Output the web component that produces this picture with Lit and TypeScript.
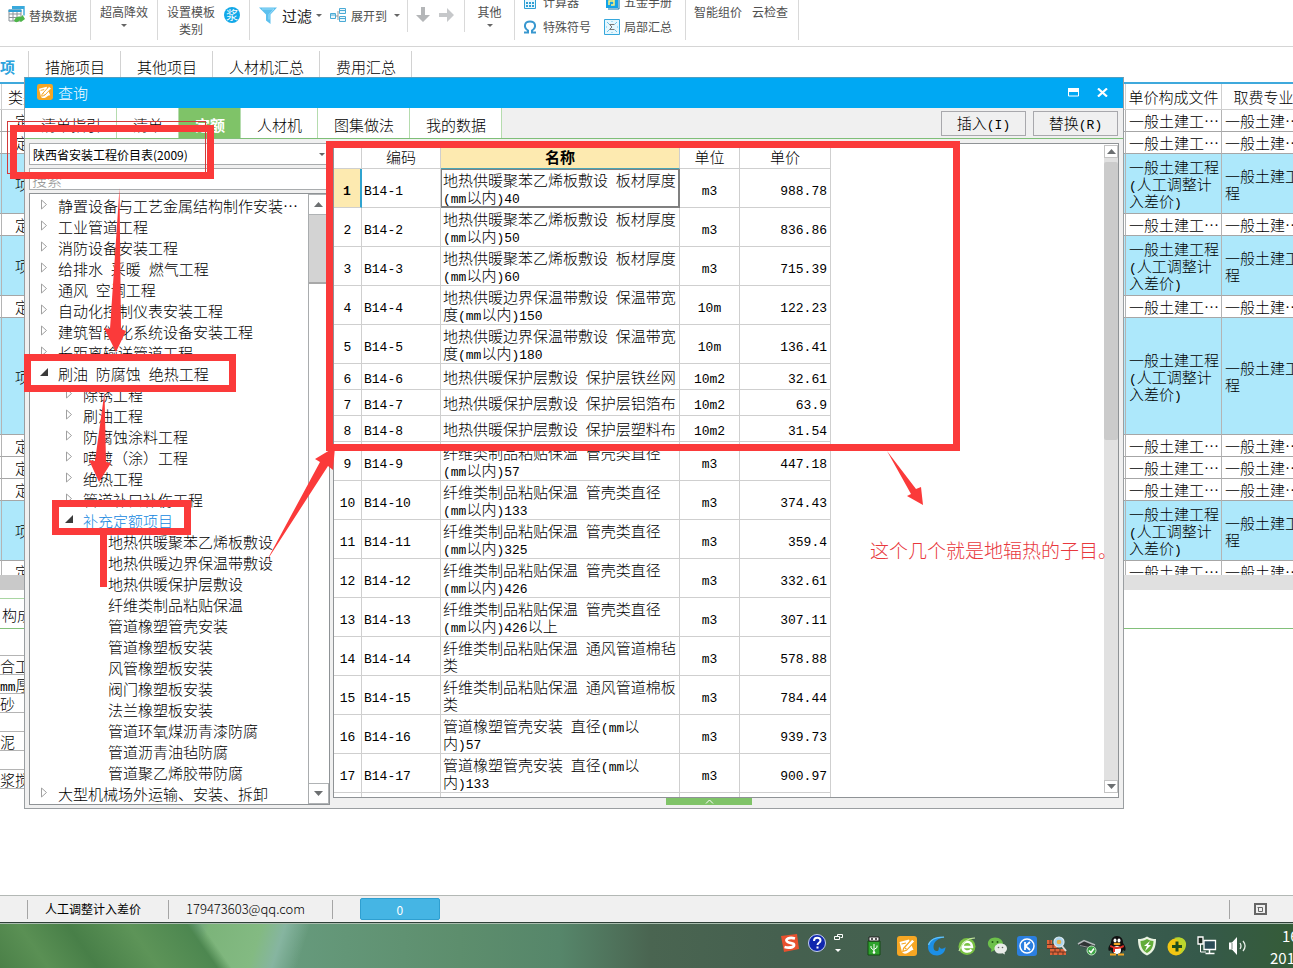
import { LitElement, html, svg, css, nothing } from "lit";
import { customElement, property } from "lit/decorators.js";
import { classMap } from "lit/directives/class-map.js";

/* Latin runs use the half-width monospace face, Chinese runs keep the body face. */
const mixed = (text: string) =>
  text
    .split(/([\x20-\x7e]+)/)
    .filter((part) => part.length > 0)
    .map((part) => (/^[\x20-\x7e]/.test(part) ? html`<span class="latin">${part}</span>` : part));

const shared = css`
  * {
    box-sizing: border-box;
  }
  button,
  input,
  select {
    font: inherit;
    color: inherit;
    margin: 0;
    padding: 0;
    border: 0;
    border-radius: 0;
    background: none;
    outline: none;
  }
  svg {
    display: block;
    flex: none;
  }
  table {
    border-collapse: separate;
    border-spacing: 0;
    table-layout: fixed;
  }
  .latin {
    font-family: "Liberation Mono", monospace;
    font-size: 13px;
    line-height: 0;
    white-space: pre-wrap;
  }
`;

/* ---------- icons ---------- */
const noteShape = svg`<rect width="20" height="20" rx="3" fill="#f6a623"/>
  <path d="M2.500 6 12 3.500l4.500 10.500c-3 0-4 2.500-7 3.500-2.500.5-4-.500-4.500-1.500z" fill="#fff"/>
  <path d="M6.500 12.500 15 3l3 2.300-8.500 9-3.700 1z" fill="#fff" stroke="#f6a623" stroke-width="1.200"/>
  <path d="M4.500 8l4.500-1M8 12l1.500 1.300" stroke="#f6a623" stroke-width="1.200"/>`;
const noteIcon = html`<svg width="16" height="16" viewBox="0 0 20 20">${noteShape}</svg>`;

const replaceIcon = html`<svg width="18" height="18" viewBox="0 0 18 18">
  <path d="M4 .5h12v9" fill="none" stroke="#39a9dc" stroke-width="1.4" />
  <path d="M4 0h12v3H4z" fill="#39a9dc" />
  <path d="M1 4h12v11H1zM1 8h12M1 11.500h12M5 5v10M9 5v10" fill="#fff" stroke="#8b9297" />
  <path d="M.5 3.500h13v2.500H.5z" fill="#2f9fd4" />
  <path d="M6 14.500c2-4 5-4.500 7-3.500l1.500-2L17 13l-4 3-1.500-1.500c-2 2-4 2.500-5.500 0z" fill="#4db648" />
</svg>`;
const filterIcon = html`<svg width="18" height="17" viewBox="0 0 18 17">
  <path d="M0 .5h18l-6.500 7V17L7 13.500v-6z" fill="#5cc0ee" />
  <path d="M3 2h12l-5 5.500v5" fill="none" stroke="#9adcf8" />
</svg>`;
const expandIcon = html`<svg width="17" height="15" viewBox="0 0 17 15" fill="#eaf7fd" stroke="#4aaad5">
  <path d="M.5 5.500h5v5h-5zM9.500.5h6v5h-6zM9.500 8.500h6v5h-6z" />
  <path d="M1 7h4M10 2.500h5M10 10.500h5" />
  <path d="M6 8h2M8 3v9" stroke="#999" fill="none" />
</svg>`;
const arrowDown = html`<svg width="14" height="16" viewBox="0 0 14 16"><path d="M5 0h4v8h5l-7 7-7-7h5z" fill="#b4b6b8" /></svg>`;
const arrowRight = html`<svg width="16" height="14" viewBox="0 0 16 14"><path d="M0 5v4h8v5l7-7-7-7v5z" fill="#c6c8ca" /></svg>`;
const calcIcon = html`<svg width="14" height="14" viewBox="0 0 14 14">
  <path d="M1.500.5h11v13h-11z" fill="#eaf7fd" stroke="#2f9fd4" />
  <path d="M2 1h10v4H2z" fill="#5cc0ee" />
  <path d="M3 8h8M3 11h8" stroke="#2f9fd4" stroke-width="2" stroke-dasharray="2 1" />
</svg>`;
const omegaIcon = html`<svg width="14" height="14" viewBox="0 0 14 14">
  <path d="M1 12.500h4v-2C0 7 1.500 1.500 7 1.500S14 7 9 10.500v2h4" fill="none" stroke="#3897cf" stroke-width="2" />
</svg>`;
const bookIcon = html`<svg width="16" height="16" viewBox="0 0 16 16">
  <path d="M2 1h12v13H2z" fill="#12a2e6" /><path d="M4 15h11V3" fill="none" stroke="#0b74aa" />
  <path d="M5 11V7h5M10 5v6H7" fill="none" stroke="#fff27a" stroke-width="1.500" />
</svg>`;
const sumIcon = html`<svg width="16" height="16" viewBox="0 0 16 16">
  <path d="M.5.5h15v15H.5z" fill="#e6f7fe" stroke="#35a7dc" />
  <path d="M3 3l2 2M13 3l-2 2M3 13l2-2M13 13l-2-2M8 2v1M8 13v1M2 8h1M13 8h1" stroke="#6cc3ea" />
  <path d="M10.500 5.500h-5L8 8l-2.500 2.500h5" fill="none" stroke="#777" />
</svg>`;
const caret = html`<svg width="6" height="3" viewBox="0 0 6 3"><path d="M0 0h6L3 3z" fill="#666" /></svg>`;

const trayIcons = [
  svg`<path d="M1 5h12v14H1z" fill="#2fa32d" stroke="#124d12"/><path d="M2 1h10v4H2z" fill="#f4f4f4" stroke="#222"/><path d="M4 3h2M8 3h2" stroke="#222" stroke-width="1.500"/><path d="M7 8v9M4 10v2l3 2.500M10 9.500v2L7 13.500" fill="none" stroke="#fff"/><circle cx="7" cy="16.500" r="1.300" fill="#fff"/>`,
  noteShape,
  svg`<path d="M18 1.500C9-1 1 4 1 11c0 5 4 8.500 9 8.500s8.500-4 8.500-8.500c-1.500 1.500-3 2-4.500 1.500-1-.300-1.500-1-2-2-.5 2.500 0 4-1.500 4.500-2.500.500-4-1.500-4-4C6.500 5.500 11 2 18 1.500z" fill="#1c8fe6"/><path d="M17 1.200C9 1 3 4 1.500 9" fill="none" stroke="#67c3f7" stroke-width="1.300"/>`,
  svg`<circle cx="10" cy="10.500" r="8.500" fill="#79c143"/><path d="M5.500 11h9.500c0-7-9.500-7-9.500 0 0 5 6.500 6 9 2.500" fill="none" stroke="#fff" stroke-width="2.500"/><path d="M2 15C5 7 11 2 18 2" fill="none" stroke="#c5e89f" stroke-width="1.200"/>`,
  svg`<path d="M8 1.500c5 0 8 3 8 6.500S13 14 8 14l-4 2 .500-3C-2 9 1 1.500 8 1.500z" fill="#6cc04a"/><circle cx="5.500" cy="6" r="1" fill="#235d16"/><circle cx="10.500" cy="6" r="1" fill="#235d16"/><path d="M13.500 7.500c4 0 6.500 2.300 6.500 5 0 1.800-1 3-2.500 4l.5 2-2.500-1.200C10 18.500 7.500 15.500 7.500 12.500c0-3 3-5 6-5z" fill="#e9ece9"/><circle cx="11.500" cy="11.500" r=".8" fill="#666"/><circle cx="15.500" cy="11.500" r=".8" fill="#666"/>`,
  svg`<rect width="20" height="20" rx="3" fill="#2b7fe0"/><circle cx="10" cy="10" r="7" fill="none" stroke="#fff" stroke-width="1.500"/><path d="M8 6v8M13 6l-4.500 4L13 14" fill="none" stroke="#fff" stroke-width="1.800"/>`,
  svg`<path d="M0 4h5v5h5v4h9v6H3v-6H0z" fill="#e0663a"/><path d="M0 8.500h10M0 12.500h12M3 16h16M3 4v4M6 9v4M8 13v3M13 13v3M6 16v3M11 16v3M16 16v3" stroke="#6b3320"/><circle cx="12" cy="6" r="5" fill="#a9d5ef" stroke="#dce9f0" stroke-width="1.200"/><circle cx="12" cy="6" r="2.300" fill="#e9b44a"/><path d="M15 10l4 5" stroke="#d9d9d9" stroke-width="2"/>`,
  svg`<path d="M1 8l6-4 11 5-2 4L5 11z" fill="#303435"/><path d="M1 8l6-3.500L18 9" fill="none" stroke="#b4b9bb" stroke-width="1.500"/><path d="M3 9.500l9 2" stroke="#8a9092"/><circle cx="14.500" cy="14.500" r="4.500" fill="#3da546" stroke="#bfe3c2"/><path d="M12 14.500l2 2 3-4" fill="none" stroke="#fff" stroke-width="1.500"/>`,
  svg`<path d="M10 0c4 0 6 3 6 7 3 4 3 6 2 8l-2-1c-1 3-3 4-6 4s-5-1-6-4l-2 1c-1-2-1-4 2-8 0-4 2-7 6-7z" fill="#111"/><ellipse cx="10" cy="14" rx="4" ry="4" fill="#fff"/><ellipse cx="8" cy="4.500" rx="1.500" ry="2" fill="#fff"/><ellipse cx="12" cy="4.500" rx="1.500" ry="2" fill="#fff"/><ellipse cx="10" cy="8" rx="3.500" ry="1.200" fill="#f5a623"/><path d="M3.500 9c4 2.500 9 2.500 13 0l.5 2c-4 2-6 2-9 2v3H6v-4l-3-1z" fill="#e33227"/><path d="M3 18.500h6M11 18.500h6" stroke="#f5a623" stroke-width="2"/>`,
  svg`<path d="M10 .5c3 2 6 2.500 9 2.500 0 8-2 13.500-9 16.500C3 16.500 1 11 1 3c3 0 6-.5 9-2.500z" fill="#eaf3e2"/><path d="M10 3c2 1.300 4 1.800 6.500 2-.2 6-2 9.500-6.500 12-4.500-2.500-6.300-6-6.500-12C6 4.800 8 4.300 10 3z" fill="#63ad3a"/><path d="M13 5l-6 5h3l-2 5 6-6h-3z" fill="#fff"/>`,
  svg`<circle cx="9" cy="11" r="8.500" fill="#f3c613"/><path d="M7 2c5-2 11 0 12 5 .5 5-2 9-7 11 5-6 2-12-5-16z" fill="#b9d52d"/><path d="M10 5.500v10M5 10.500h10" stroke="#1f4d1c" stroke-width="3"/>`,
  svg`<path d="M1 1h5v7H1z" fill="#1c2a22" stroke="#fff" stroke-width="1.300"/><path d="M3.500 8v8H9" fill="none" stroke="#fff"/><path d="M7 4.500h11.500v9H7z" fill="#2b4b57" stroke="#fff" stroke-width="1.300"/><path d="M12.500 14v3M8.500 17.500h9" stroke="#fff" stroke-width="1.500"/>`,
  svg`<path d="M2 6.500h3L10 1v18l-5-5.500H2z" fill="#fff"/><path d="M5 7v6" stroke="#78887e"/><path d="M13 7c1.300 2 1.300 4 0 6M16 5c2.500 3 2.500 7 0 10" fill="none" stroke="#e8efe9" stroke-width="1.300"/>`,
];

/* ---------- ribbon ---------- */
@customElement("app-ribbon")
class AppRibbon extends LitElement {
  static styles = [
    shared,
    css`
      :host {
        display: flex;
        height: 47px;
        flex: none;
        border-bottom: 1px solid #d5d5d5;
        background: #fff;
        font-size: 12px;
        font-weight: 400;
        line-height: 17px;
        color: #505050;
        overflow: hidden;
      }
      .group {
        display: flex;
        height: 40px;
        border-right: 1px solid #d9d9d9;
        white-space: nowrap;
      }
      .short {
        height: 32px;
      }
      button {
        display: flex;
        align-items: center;
        gap: 4px;
      }
      .stack {
        flex-direction: column;
        justify-content: flex-start;
        width: 100%;
        padding-top: 3px;
      }
      .g1 { width: 91px; padding: 0 8px; }
      .g1 button { height: 30px; gap: 3px; }
      .g2 { width: 67px; }
      .g3 { width: 92px; }
      .g3 .stack { width: 66px; gap: 0; }
      .badge {
        width: 16px;
        height: 16px;
        margin-top: 7px;
        border-radius: 8px;
        background: #12a8e8;
        color: #fff;
        font-size: 12px;
        line-height: 16px;
        justify-content: center;
      }
      .g4 { width: 158px; padding-left: 9px; gap: 8px; }
      .g4 button { height: 31px; }
      .g4 .spread { gap: 4px; }
      .big { font-size: 15px; color: #222; padding-left: 1px; }
      .g5 { width: 57px; padding-left: 8px; gap: 9px; }
      .g5 button { height: 30px; }
      .g6 { width: 50px; }
      .g7 {
        width: 171px;
        display: grid;
        grid-template: 25px 25px / 81px 80px;
        margin-top: -11px;
        height: 51px;
        padding-left: 8px;
      }
      .g7 button:nth-child(odd) { gap: 6px; }
      .g8 { width: 113px; padding-left: 8px; gap: 10px; align-items: flex-start; }
      .g8 button { padding-top: 3px; }
    `,
  ];
  render() {
    return html`
      <div class="group g1"><button>${replaceIcon}替换数据</button></div>
      <div class="group g2"><button class="stack">超高降效${caret}</button></div>
      <div class="group g3">
        <button class="stack"><span>设置模板</span><span>类别</span></button>
        <button class="badge">浆</button>
      </div>
      <div class="group g4 short">
        <button>${filterIcon}<span class="big">过滤</span>${caret}</button>
        <button class="spread">${expandIcon}展开到&nbsp;${caret}</button>
      </div>
      <div class="group g5 short">
        <button aria-label="下移">${arrowDown}</button><button aria-label="右移">${arrowRight}</button>
      </div>
      <div class="group g6"><button class="stack">其他${caret}</button></div>
      <div class="group g7">
        <button>${calcIcon}计算器</button><button>${bookIcon}五金手册</button>
        <button>${omegaIcon}特殊符号</button><button>${sumIcon}局部汇总</button>
      </div>
      <div class="group g8"><button>智能组价</button><button>云检查</button></div>
    `;
  }
}

/* ---------- bill grid behind the dialog ---------- */
type Kind = "item" | "quota" | "tall";
const billRows: Kind[] = [
  "quota", "quota", "item", "quota", "item", "quota", "tall", "quota", "quota", "quota", "item", "quota",
];

@customElement("bill-view")
class BillView extends LitElement {
  static styles = [
    shared,
    css`
      :host {
        display: block;
        flex: 1;
        min-height: 0;
        overflow: hidden;
        background: #fff;
        font-size: 15px;
        line-height: 17px;
      }
      .clip {
        height: 491px;
        overflow: hidden;
      }
      .bill {
        width: calc(100% + 13px);
      }
      .c0 { width: 2px; }
      .c1 { width: 60px; }
      .c3 { width: 96px; }
      .c4 { width: 84px; }
      .bill th,
      .bill td {
        height: 22px;
        padding: 0 0 0 3px;
        border-right: 1px solid #b4b4b4;
        border-bottom: 1px solid #a6a6a6;
        text-align: left;
        font-weight: inherit;
        overflow: hidden;
        white-space: pre-line;
      }
      .bill th {
        height: 26px;
        padding: 0;
        text-align: center;
        border-color: #cfcfcf;
        white-space: nowrap;
      }
      .bill th.kind {
        padding-left: 6px;
        text-align: left;
      }
      .bill td.kind {
        padding-left: 13px;
      }
      .item td { height: 60px; background: #ade8fb; }
      .tall td { height: 117px; background: #ade8fb; }
      .bar {
        height: 15px;
        background: linear-gradient(90deg, #c9c9c9 60%, #e0e0e0 60%);
      }
      .tabs {
        display: flex;
        margin-top: 8px;
        height: 31px;
        border-bottom: 1px solid #82c07a;
      }
      .tabs button {
        width: 600px;
        padding: 2px 0 0 2px;
        border-top: 1px solid #a9d6a2;
        text-align: left;
      }
      .detail {
        width: 60%;
        margin-top: 26px;
        border-top: 1px solid #b4b4b4;
      }
      .detail td {
        height: 19px;
        padding: 0;
        border-bottom: 1px solid #b4b4b4;
        white-space: nowrap;
      }
    `,
  ];
  render() {
    return html`
      <div class="clip">
        <table class="bill">
          <colgroup><col class="c0" /><col class="c1" /><col /><col class="c3" /><col class="c4" /></colgroup>
          <thead>
            <tr><th></th><th class="kind">类别</th><th></th><th>单价构成文件</th><th>取费专业</th></tr>
          </thead>
          <tbody>
            ${billRows.map(
              (kind) => html`<tr class=${kind}>
                <td></td>
                <td class="kind">${kind === "quota" ? "定" : "项"}</td>
                <td></td>
                <td>${kind === "quota" ? "一般土建工…" : mixed("一般土建工程\n(人工调整计\n入差价)")}</td>
                <td>${kind === "quota" ? "一般土建…" : "一般土建工\n程"}</td>
              </tr>`
            )}
          </tbody>
        </table>
      </div>
      <div class="bar"></div>
      <div class="tabs"><button>构成</button></div>
      <table class="detail">
        <tbody>
          ${["合工", "mm厚", "砂", "", "泥 :", "", "浆搅"].map((t) => html`<tr><td>${mixed(t)}</td></tr>`)}
        </tbody>
      </table>
    `;
  }
}

/* ---------- catalogue tree ---------- */
type Node = { t: string; l: number; s: "closed" | "open" | "leaf"; current?: boolean };
const closed = (l: number, ...names: string[]): Node[] => names.map((t) => ({ t, l, s: "closed" }));
const leaves = (...names: string[]): Node[] => names.map((t) => ({ t, l: 2, s: "leaf" }));
const nodes: Node[] = [
  ...closed(
    0, "静置设备与工艺金属结构制作安装…", "工业管道工程", "消防设备安装工程", "给排水 采暖 燃气工程",
    "通风 空调工程", "自动化控制仪表安装工程", "建筑智能化系统设备安装工程", "长距离输送管道工程"
  ),
  { t: "刷油 防腐蚀 绝热工程", l: 0, s: "open" },
  ...closed(1, "除锈工程", "刷油工程", "防腐蚀涂料工程", "喷镀（涂）工程", "绝热工程", "管道补口补伤工程"),
  { t: "补充定额项目", l: 1, s: "open", current: true },
  ...leaves(
    "地热供暖聚苯乙烯板敷设", "地热供暖边界保温带敷设", "地热供暖保护层敷设", "纤维类制品粘贴保温",
    "管道橡塑管壳安装", "管道橡塑板安装", "风管橡塑板安装", "阀门橡塑板安装", "法兰橡塑板安装",
    "管道环氧煤沥青漆防腐", "管道沥青油毡防腐", "管道聚乙烯胶带防腐"
  ),
  ...closed(0, "大型机械场外运输、安装、拆卸"),
];

@customElement("catalog-tree")
class CatalogTree extends LitElement {
  static styles = [
    shared,
    css`
      :host {
        display: flex;
        flex: 1;
        min-height: 0;
        border: 1px solid #8f9396;
        background: #fff;
      }
      ul {
        flex: 1;
        min-width: 0;
        margin: 0;
        padding: 1px 0 0;
        list-style: none;
        overflow: hidden;
      }
      li {
        display: flex;
        height: 21px;
        line-height: 21px;
        white-space: nowrap;
      }
      .l0 { padding-left: 9px; }
      .l1 { padding-left: 34px; }
      .l2 { padding-left: 59px; }
      .mark {
        width: 19px;
        padding: 4px 0 0 1px;
      }
      .current {
        color: #1287e0;
      }
    `,
  ];
  render() {
    return html`
      <ul role="tree" aria-label="定额目录">
        ${nodes.map(
          (n) => html`<li role="treeitem" class="l${n.l}">
            <span class="mark">
              ${n.s === "closed"
                ? html`<svg width="8" height="11" viewBox="0 0 8 11"><path d="M1.500 1v9l5-4.500z" fill="#fff" stroke="#a0a0a0" /></svg>`
                : n.s === "open"
                ? html`<svg width="8" height="11" viewBox="0 0 8 11"><path d="M8 1v8H0z" fill="#3b3b3b" /></svg>`
                : nothing}
            </span>
            <span class=${classMap({ current: !!n.current })}>${mixed(n.t)}</span>
          </li>`
        )}
      </ul>
      <scroll-rail kind="tree"></scroll-rail>
    `;
  }
}

@customElement("scroll-rail")
class ScrollRail extends LitElement {
  @property({ reflect: true }) kind = "tree";
  static styles = [
    shared,
    css`
      :host {
        display: flex;
        flex-direction: column;
        flex: none;
        width: 21px;
        border-left: 1px solid #a9acae;
        background: #fff;
      }
      button {
        display: flex;
        align-items: center;
        justify-content: center;
        height: 21px;
        flex: none;
        border: 1px solid #b0b3b5;
        border-left: 0;
      }
      .thumb {
        height: 69px;
        background: #d3d3d3;
        border-bottom: 2px solid #a8a8a8;
      }
      .track {
        flex: 1;
      }
      :host([kind="table"]) {
        width: 14px;
        margin: 1px 0 4px;
        border-left: 0;
        background: #e1e1e1;
      }
      :host([kind="table"]) button {
        height: 13px;
        border: 1px solid #c4c4c4;
        background: #fff;
      }
      :host([kind="table"]) .thumb {
        height: 278px;
        margin-top: 4px;
        border: 0;
        border-radius: 2px;
        background: #cbcbcb;
      }
    `,
  ];
  render() {
    return html`
      <button aria-label="向上滚动"><svg width="9" height="5" viewBox="0 0 9 5"><path d="M4.500 0 9 5H0z" fill="#6c6f71" /></svg></button>
      <div class="thumb"></div>
      <div class="track"></div>
      <button aria-label="向下滚动"><svg width="9" height="5" viewBox="0 0 9 5"><path d="M4.500 5 9 0H0z" fill="#6c6f71" /></svg></button>
    `;
  }
}

/* ---------- quota table ---------- */
const board = "地热供暖聚苯乙烯板敷设 板材厚度\n(mm以内)";
const edge = "地热供暖边界保温带敷设 保温带宽\n度(mm以内)";
const cover = "地热供暖保护层敷设 保护层";
const fibre = "纤维类制品粘贴保温 管壳类直径\n(mm以内)";
const felt = "纤维类制品粘贴保温 通风管道棉";
const rubber = "管道橡塑管壳安装 直径(mm以\n内)";
const quotas: [string, string, string][] = [
  [board + "40", "m3", "988.78"],
  [board + "50", "m3", "836.86"],
  [board + "60", "m3", "715.39"],
  [edge + "150", "10m", "122.23"],
  [edge + "180", "10m", "136.41"],
  [cover + "铁丝网", "10m2", "32.61"],
  [cover + "铝箔布", "10m2", "63.9"],
  [cover + "塑料布", "10m2", "31.54"],
  [fibre + "57", "m3", "447.18"],
  [fibre + "133", "m3", "374.43"],
  [fibre + "325", "m3", "359.4"],
  [fibre + "426", "m3", "332.61"],
  [fibre + "426以上", "m3", "307.11"],
  [felt + "毡\n类", "m3", "578.88"],
  [felt + "板\n类", "m3", "784.44"],
  [rubber + "57", "m3", "939.73"],
  [rubber + "133", "m3", "900.97"],
];

@customElement("quota-table")
class QuotaTable extends LitElement {
  static styles = [
    shared,
    css`
      :host {
        display: flex;
        flex: 1;
        min-height: 0;
        border: 1px solid #8f9396;
        background: #fff;
        line-height: 17px;
      }
      .view {
        flex: 1;
        overflow: hidden;
      }
      table {
        width: 497px;
      }
      .n { width: 28px; }
      .code { width: 79px; }
      .unit { width: 60px; }
      .price { width: 91px; }
      th,
      td {
        padding: 0 3px;
        height: 26px;
        border-right: 1px solid #cfcfcf;
        border-bottom: 1px solid #cfcfcf;
        font-weight: inherit;
        text-align: center;
        white-space: pre-line;
      }
      thead th {
        height: 25px;
      }
      thead .hot {
        background: #fdeab0;
        border-bottom-color: #4aa5b5;
        font-weight: 700;
      }
      .two td,
      .two th {
        height: 39px;
      }
      td.text {
        padding: 0 2px;
        text-align: left;
      }
      td.num {
        text-align: right;
      }
      .first th {
        background: #fdeab0;
        border-right: 2px solid #2fa3cf;
        font-weight: 700;
      }
      .first .name {
        box-shadow: inset 0 0 0 1px #808080;
        border-color: #808080;
      }
    `,
  ];
  render() {
    return html`
      <div class="view">
        <table>
          <colgroup><col class="n" /><col class="code" /><col /><col class="unit" /><col class="price" /></colgroup>
          <thead>
            <tr><th></th><th>编码</th><th class="hot">名称</th><th>单位</th><th>单价</th></tr>
          </thead>
          <tbody>
            ${quotas.map(
              ([name, unit, price], i) => html`<tr class=${classMap({ two: name.includes("\n"), first: i === 0 })}>
                <th scope="row">${mixed(String(i + 1))}</th>
                <td class="text">${mixed("B14-" + (i + 1))}</td>
                <td class="text name">${mixed(name)}</td>
                <td>${mixed(unit)}</td>
                <td class="num">${mixed(price)}</td>
              </tr>`
            )}
            <tr><th></th><td></td><td></td><td></td><td></td></tr>
          </tbody>
        </table>
      </div>
      <scroll-rail kind="table"></scroll-rail>
    `;
  }
}

/* ---------- query dialog ---------- */
@customElement("query-dialog")
class QueryDialog extends LitElement {
  static styles = [
    shared,
    css`
      :host {
        display: flex;
        flex-direction: column;
        border: 1px solid #9a9ea1;
        border-top-color: #4d9fc4;
        background: #f0f0f0;
        font-size: 15px;
      }
      header {
        display: flex;
        align-items: center;
        height: 30px;
        flex: none;
        padding: 0 15px 2px 12px;
        gap: 5px;
        background: #00a8f3;
        color: #fff;
      }
      header span {
        flex: 1;
      }
      header button {
        margin-left: 13px;
      }
      .tabs {
        display: flex;
        height: 31px;
        flex: none;
        border-bottom: 1px solid #7fbf78;
      }
      .tabs .tab {
        padding: 2px 15px 0 16px;
        border-right: 1px solid #b5dcae;
        background: #fff;
      }
      .tabs .on {
        background: #7fc368;
        color: #fff;
        font-weight: 700;
      }
      .actions {
        display: flex;
        flex: 1;
        justify-content: flex-end;
        gap: 7px;
        padding: 3px 5px 2px;
      }
      .actions button {
        width: 85px;
        padding-bottom: 2px;
        border: 1px solid #a8a8ac;
      }
      .body {
        display: flex;
        flex: 1;
        min-height: 0;
        gap: 3px;
        padding: 4px 4px 3px;
      }
      .side {
        display: flex;
        flex-direction: column;
        width: 301px;
        gap: 3px;
      }
      .pick {
        display: flex;
        align-items: center;
        height: 22px;
        flex: none;
        padding-right: 4px;
        border: 1px solid #a9acae;
        background: #fff;
      }
      select {
        flex: 1;
        height: 20px;
        padding-left: 3px;
        appearance: none;
        font-size: 12px;
        font-weight: 400;
        color: #000;
      }
      input {
        height: 22px;
        flex: none;
        padding: 0 2px;
        border: 1px solid #a9acae;
        background: #fff;
      }
      input::placeholder {
        color: #8c8c8c;
        opacity: 1;
      }
      .main {
        display: flex;
        flex-direction: column;
        align-items: stretch;
        flex: 1;
        min-width: 0;
      }
      .grip {
        display: flex;
        align-items: center;
        justify-content: center;
        align-self: center;
        width: 86px;
        height: 7px;
        margin-right: 34px;
        background: #7fc368;
      }
    `,
  ];
  render() {
    const tabs = ["清单指引", "清单", "定额", "人材机", "图集做法", "我的数据"];
    return html`
      <header>
        ${noteIcon}<span>查询</span>
        <button aria-label="最大化"><svg width="11" height="9" viewBox="0 0 11 9"><path d="M.5 1h10v7H.5z" fill="none" stroke="#fff" /><path d="M0 0h11v4H0z" fill="#fff" /></svg></button>
        <button aria-label="关闭"><svg width="11" height="9" viewBox="0 0 11 9"><path d="M1 .5 10 8.500M10 .5 1 8.500" stroke="#fff" stroke-width="2.200" /></svg></button>
      </header>
      <div class="tabs">
        ${tabs.map((t) => html`<button class=${classMap({ tab: true, on: t === "定额" })}>${t}</button>`)}
        <div class="actions"><button>插入${mixed("(I)")}</button><button>替换${mixed("(R)")}</button></div>
      </div>
      <div class="body">
        <div class="side">
          <div class="pick">
            <select aria-label="定额库"><option>陕西省安装工程价目表(2009)</option></select>${caret}
          </div>
          <input type="text" aria-label="搜索" placeholder="搜索" />
          <catalog-tree></catalog-tree>
        </div>
        <div class="main">
          <quota-table></quota-table>
          <button class="grip" aria-label="展开"><svg width="9" height="5" viewBox="0 0 9 5"><path d="M1 4.500 4.500 1 8 4.500" fill="none" stroke="#fff" /></svg></button>
        </div>
      </div>
    `;
  }
}

/* ---------- desktop taskbar ---------- */
@customElement("task-bar")
class TaskBar extends LitElement {
  static styles = [
    shared,
    css`
      :host {
        display: flex;
        justify-content: flex-end;
        height: 46px;
        flex: none;
        border-top: 1px solid #2f4038;
        box-shadow: inset 0 1px 0 #a9bcae;
        overflow: hidden;
        color: #fff;
        background:
          linear-gradient(55deg, #4b8048 0, #5a9054 40px, #487f48 80px, #5d9458 130px, #4d8750 178px, transparent 190px),
          linear-gradient(108deg, transparent 180px, #7cb47a 200px, #83ba82 250px, #86b5a0 272px, transparent 296px),
          linear-gradient(90deg, #669a7c 290px, #5d8e6d 460px, #56866a 560px, #4a6551 650px, #45604f 780px, #43614f 1000px, #3b5c50 1100px, #35594a 1200px, #355c38 100%);
      }
      .ime {
        display: flex;
        gap: 7px;
        padding: 10px 21px 0 0;
      }
      .tray {
        display: flex;
        gap: 10px;
        padding-top: 13px;
      }
      .clock {
        width: 46px;
        padding: 2px 0 0 23px;
        font-size: 15px;
        font-weight: 400;
        line-height: 22px;
        white-space: nowrap;
      }
      .clock span {
        display: block;
        padding-left: 12px;
      }
      .clock span + span {
        padding-left: 0;
      }
    `,
  ];
  render() {
    return html`
      <div class="ime">
        <svg width="20" height="20" viewBox="0 0 20 20"><path d="M1 3 17 1l2 15-15 3z" fill="#e8502e" /><path d="M15 5.500C9 4 5 6 7 8.500s7 .5 7 3.500-6 3-9.500 2" fill="none" stroke="#fff" stroke-width="2.800" /></svg>
        <svg width="20" height="20" viewBox="0 0 20 20"><circle cx="10" cy="10" r="8.500" fill="#1027ad" stroke="#c5cff2" /><path d="M7 8c0-4.500 6.500-4 6.500-.5 0 2.500-3 2-3 4.500M10.500 13.500v2" fill="none" stroke="#fff" stroke-width="2" /></svg>
        <svg width="12" height="20" viewBox="0 0 12 20"><path d="M3.500 3.500v-2h5v3h-2M.5 3.500h5v3h-5z" fill="none" stroke="#fff" /><path d="M1 16h6l-3 3z" fill="#fff" /></svg>
      </div>
      <div class="tray">
        ${trayIcons.map((shape) => html`<svg width="20" height="20" viewBox="0 0 20 20">${shape}</svg>`)}
      </div>
      <div class="clock"><span>16</span><span>201</span></div>
    `;
  }
}

/* ---------- page ---------- */
@customElement("app-root")
class AppRoot extends LitElement {
  static styles = [
    shared,
    css`
      :host {
        display: flex;
        flex-direction: column;
        position: relative;
        height: 100vh;
        overflow: hidden;
        background: #fff;
        color: #000;
        font-family: "Noto Sans CJK SC", sans-serif;
        font-size: 15px;
        font-weight: 300;
      }
      nav {
        display: flex;
        height: 37px;
        flex: none;
        padding-top: 4px;
        border-bottom: 2px solid #3fa9dc;
      }
      nav button {
        padding: 0 15px 0 16px;
        border-right: 1px solid #d2d2d2;
      }
      nav .on {
        width: 29px;
        padding: 0 14px 0 0;
        color: #2ba3dd;
        font-weight: 700;
      }
      query-dialog {
        position: absolute;
        inset: 77px 169px 159px 24px;
      }
      .status {
        display: flex;
        align-items: center;
        height: 27px;
        flex: none;
        border-top: 1px solid #b3b8b5;
        background: #f0f0f0;
        font-size: 12px;
        font-weight: 400;
      }
      .status span {
        height: 19px;
        line-height: 18px;
        padding: 0 27px 0 17px;
        border-left: 1px solid #a5a5a5;
      }
      .status span.lead {
        margin-left: 27px;
      }
      .status span.mail {
        border-right: 1px solid #a5a5a5;
        font-size: 13px;
        font-weight: 300;
      }
      .status button {
        width: 80px;
        height: 22px;
        margin-left: 27px;
        border: 1px solid #2f9fd0;
        border-radius: 2px;
        background: #45b5e4;
        color: #fff;
      }
      .status .tail {
        margin-left: auto;
        padding: 3px 26px 0 24px;
      }
      .marks {
        position: absolute;
        inset: 0;
        width: 100%;
        height: 100%;
        pointer-events: none;
      }
      .note {
        position: absolute;
        left: 870px;
        top: 537px;
        margin: 0;
        font-size: 19px;
        line-height: 25px;
        color: #e8383d;
        white-space: nowrap;
      }
    `,
  ];
  render() {
    return html`
      <app-ribbon></app-ribbon>
      <nav>
        <button class="on">项</button><button>措施项目</button><button>其他项目</button><button>人材机汇总</button
        ><button>费用汇总</button>
      </nav>
      <bill-view></bill-view>
      <div class="status">
        <span class="lead">人工调整计入差价</span><span class="mail">179473603@qq.com</span><button>0</button>
        <span class="tail"><svg width="13" height="12" viewBox="0 0 13 12"><path d="M1 1h11v10H1z" fill="none" stroke="#666" stroke-width="2" /><path d="M4.500 5v3.500h4v-4h-5" fill="none" stroke="#666" /></svg></span>
      </div>
      <task-bar></task-bar>
      <query-dialog></query-dialog>
      <svg class="marks" fill="none" stroke="#fb3a3a" stroke-width="7">
        <rect x="7.500" y="121.500" width="198" height="52" stroke="#d23a3a" stroke-width="1" />
        <rect x="13.500" y="128.500" width="197" height="47" />
        <rect x="27.500" y="357.500" width="205" height="31" />
        <rect x="55.500" y="503.500" width="132" height="28" />
        <rect x="329.500" y="144.500" width="627" height="303" />
        <g fill="#fb3a3a" stroke="none">
          <rect x="100" y="535" width="7" height="52" />
          <path d="M119.500 188 121 329 126 331 116 352 104 328 110 329z" />
          <path d="M104.500 392 106 462 111 463 99 482 89 460 95 461z" />
          <path d="M266 562 320 462 315 459 335 447 333 470 328 466z" />
          <path d="M887 451 916 489 921 487 923 505 907 496 911 494z" />
        </g>
      </svg>
      <p class="note">这个几个就是地辐热的子目。</p>
    `;
  }
}
